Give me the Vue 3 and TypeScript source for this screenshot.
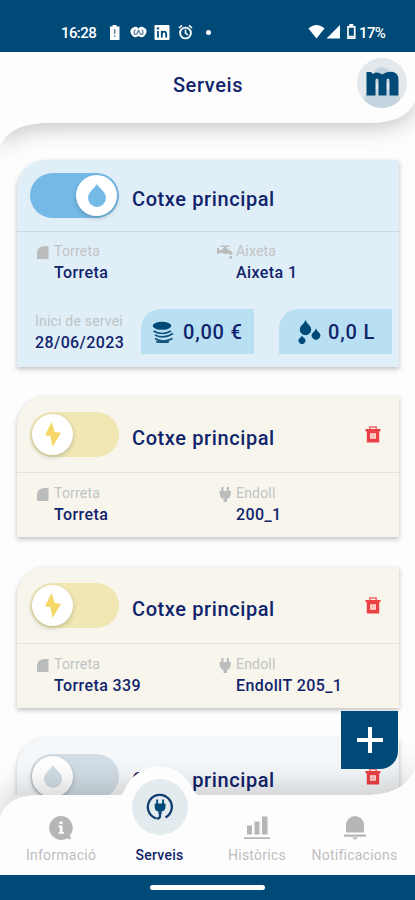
<script setup lang="ts">
interface Field {
  icon: 'tower' | 'tap' | 'plug'
  label: string
  value: string
}

interface Service {
  id: number
  kind: 'water' | 'power' | 'idle'
  active: boolean
  title: string
  removable: boolean
  fields: Field[]
  usage?: { start: string; cost: string; volume: string }
}

interface Tab {
  id: string
  label: string
  active: boolean
}

const services: Service[] = [
  {
    id: 1,
    kind: 'water',
    active: true,
    title: 'Cotxe principal',
    removable: false,
    fields: [
      { icon: 'tower', label: 'Torreta', value: 'Torreta' },
      { icon: 'tap', label: 'Aixeta', value: 'Aixeta 1' },
    ],
    usage: { start: '28/06/2023', cost: '0,00 €', volume: '0,0 L' },
  },
  {
    id: 2,
    kind: 'power',
    active: false,
    title: 'Cotxe principal',
    removable: true,
    fields: [
      { icon: 'tower', label: 'Torreta', value: 'Torreta' },
      { icon: 'plug', label: 'Endoll', value: '200_1' },
    ],
  },
  {
    id: 3,
    kind: 'power',
    active: false,
    title: 'Cotxe principal',
    removable: true,
    fields: [
      { icon: 'tower', label: 'Torreta', value: 'Torreta 339' },
      { icon: 'plug', label: 'Endoll', value: 'EndollT 205_1' },
    ],
  },
  {
    id: 4,
    kind: 'idle',
    active: false,
    title: 'Cotxe principal',
    removable: true,
    fields: [],
  },
]

const tabs: Tab[] = [
  { id: 'info', label: 'Informació', active: false },
  { id: 'services', label: 'Serveis', active: true },
  { id: 'history', label: 'Històrics', active: false },
  { id: 'alerts', label: 'Notificacions', active: false },
]
</script>

<template>
  <div class="screen">
    <div class="status">
      <span class="clock">16:28</span>
      <svg class="status-left" width="100" height="18" viewBox="0 0 100 18">
        <path d="M2 3.500h2.500V2h4v1.500H11.500V17H2z" fill="#fff" />
        <path d="M6.700 6v5M6.700 12.500v1.500" stroke="#527b98" stroke-width="1.300" />
        <path d="M24.500 5c2.500-1.800 4.300-1.300 6 .5 1.700-1.800 3.500-2.300 6-.5 3.500 2 2 5.500-.2 8-2 1.700-4 1.400-5.800 0-1.800 1.400-3.800 1.700-5.800 0-2.200-2.500-3.700-6-.2-8z" fill="#fff" />
        <path d="M27.700 7c-2 0-2 4.500 0 4.500S30 7.500 30.500 7M33.500 7c2 0 2 4.500 0 4.500S31 7.500 30.500 7" fill="none" stroke="#527b98" stroke-width="1.200" />
        <rect x="46.500" y="2" width="15" height="15" rx="1" fill="#fff" />
        <path d="M50 8v6.500M53.800 8v6.500M53.800 11c0-3 4.400-3.300 4.400 0v3.500" fill="none" stroke="#004a78" stroke-width="1.800" />
        <circle cx="50" cy="5.400" r="1.200" fill="#004a78" />
        <circle cx="77.500" cy="10" r="5.400" fill="none" stroke="#fff" stroke-width="1.900" />
        <path d="M71 5l3-2.700M84 5l-3-2.700M77.500 6.500V10l2.500 2" fill="none" stroke="#fff" stroke-width="1.600" />
      </svg>
      <span class="dot"></span>
      <svg class="status-right" width="50" height="16" viewBox="0 0 50 16">
        <path d="M.5 4.500C5-.3 12-.3 16.500 4.500L8.500 14.500z" fill="#fff" />
        <path d="M32 1v13.500H18.500z" fill="#fff" />
        <path d="M40 2.800h6.700v11.400H40z" fill="none" stroke="#fff" stroke-width="1.700" />
        <path d="M41.300 0h4v2.500h-4zM41 11.700h4.800v1.500H41z" fill="#fff" />
      </svg>
      <span class="battery">17%</span>
    </div>

    <header class="header">
      <svg class="header-shape" width="415" height="96" viewBox="0 0 415 96">
        <path d="M0 0H415V50C409 63 396 71 366 71H48C22 71 6 80 0 94z" fill="#fdfdfd" />
      </svg>
      <h1 class="heading">Serveis</h1>
      <div class="avatar">
        <svg width="50" height="50" viewBox="0 0 50 50">
          <circle cx="25" cy="25" r="25" fill="#e2e8ec" />
          <circle cx="25" cy="18" r="9" fill="#c4d5e0" />
          <path d="M7 42Q8 31 25 31T43 42Q35 50 25 50T7 42z" fill="#c4d5e0" />
          <path d="M9.500 14H14L16 16Q20 13 25 16.500Q30 13 36 14Q41.500 15 41.500 22V37.500H32.500V22.500Q32.500 20.500 31 20.500T29.500 22.500V37.500H21.500V22.500Q21.500 20.500 20 20.500T18.500 22.500V37.500H9.500z" fill="#004a78" />
        </svg>
      </div>
    </header>

    <main class="list">
      <article v-for="s in services" :key="s.id" class="card" :class="s.kind">
        <div class="card-head">
          <div class="toggle" :class="{ on: s.active }">
            <span class="knob">
              <svg v-if="s.kind === 'power'" width="20" height="27" viewBox="0 0 20 27">
                <path d="M8.500 1L2 14.500L7.500 15L9.500 26L18 11.800L11.800 11z" />
              </svg>
              <svg v-else width="20" height="25" viewBox="0 0 20 25">
                <path d="M10 1C11.500 4.500 19 8.500 19 15A9 9 0 0 1 1 15C1 8.500 8.500 4.500 10 1z" />
              </svg>
            </span>
          </div>
          <h2 class="title">{{ s.title }}</h2>
          <svg v-if="s.removable" class="trash" width="16" height="17" viewBox="0 0 16 17">
            <path d="M4.800 3V1h6.400V3" fill="none" stroke="#f0686a" stroke-width="1.500" />
            <path d="M.5 3h15v2.200H14.200V16.500H1.800V5.200H.5z" fill="#ec4144" />
            <path d="M5 7.200h6v5.600H5z" fill="#ffd0cb" />
            <path d="M6.700 8.700h2.600v2.600H6.700z" fill="#f9b3b0" />
          </svg>
        </div>
        <div v-if="s.fields.length" class="fields">
          <div v-for="f in s.fields" :key="f.label" class="field">
            <svg v-if="f.icon === 'tower'" class="field-icon" width="16" height="16" viewBox="0 0 16 16">
              <path d="M2 15V9Q2 2 10 2H13.500V15z" />
            </svg>
            <svg v-else-if="f.icon === 'tap'" class="field-icon" width="16" height="16" viewBox="0 0 16 16">
              <path d="M0 4h2v2h3V4.500h2V3H3.500V1.500h9V3H9v1.500h2V6Q15.500 6 15.500 10.500H12Q12 9 10.500 9.500Q8 11 5.500 9H2v1H0zM12.600 12h2.300v3h-2.300z" />
            </svg>
            <svg v-else class="field-icon" width="16" height="16" viewBox="0 0 16 16">
              <path d="M4.300 1H6.500v4h3.300V1H12v4H14v1.500h-.3V9Q13 12 10 13V16H6.500V13Q3.300 12 2.800 9V6.500H2.300V5h2z" />
            </svg>
            <span class="label">{{ f.label }}</span>
            <span class="value">{{ f.value }}</span>
          </div>
        </div>
        <div v-if="s.usage" class="usage">
          <div class="start">
            <span class="label">Inici de servei</span>
            <span class="value">{{ s.usage.start }}</span>
          </div>
          <div class="chip">
            <svg width="22" height="22" viewBox="0 0 22 22">
              <ellipse cx="10" cy="4.800" rx="9.300" ry="4" fill="#004a78" />
              <path d="M1.500 10Q10 15 19 10M3 14Q12 18.500 21 12.500M3 17.500Q11 22.500 20.500 17.500M4 20.500Q11 22.500 17 20.800" fill="none" stroke="#11517c" stroke-width="1.600" />
            </svg>
            <span>{{ s.usage.cost }}</span>
          </div>
          <div class="chip volume">
            <svg width="23" height="24" viewBox="0 0 23 24">
              <path d="M7.500 0Q8.500 3 11.500 5.500A5.700 5.700 0 1 1 3.500 5.500Q6.500 3 7.500 0zM18 8.500Q18.800 10.500 21 12.500A4.200 4.200 0 1 1 15 12.500Q17.200 10.500 18 8.500zM4 15.500Q4.600 17 6.500 18.200A3.400 3.400 0 1 1 1.500 18.200Q3.400 17 4 15.500z" fill="#004a78" />
            </svg>
            <span>{{ s.usage.volume }}</span>
          </div>
        </div>
      </article>
    </main>

    <button class="add" aria-label="Afegir">
      <svg width="26" height="26" viewBox="0 0 26 26">
        <path d="M13 0V26M0 13H26" stroke="#fff" stroke-width="4" />
      </svg>
    </button>

    <nav class="tabbar">
      <svg class="tabbar-shape" width="415" height="110" viewBox="0 0 415 110">
        <path class="tabbar-base" d="M0 110V53C4 38 16 30 42 30H364C394 30 408 20 415 4V110z" fill="#fdfdfd" />
        <path d="M117 31Q123 30 125 24A37 37 0 0 1 193 24Q195 30 201 31z" fill="#fdfdfd" />
      </svg>
      <div v-for="t in tabs" :key="t.id" class="tab" :class="[t.id, { active: t.active }]">
        <div class="tab-icon">
          <svg v-if="t.id === 'info'" width="26" height="26" viewBox="0 0 26 26">
            <path d="M13 1A12 12 0 1 0 19 23.500L23 24.500L22 20.500A12 12 0 0 0 13 1z" fill="#b5b6b7" />
            <path d="M11.500 6.500h3v2.500h-3zM10.500 10.500h4v6.500h1.500v1.800h-5.500V17h1.300v-4.500h-1.300z" fill="#fff" />
          </svg>
          <svg v-else-if="t.id === 'services'" width="28" height="28" viewBox="0 0 28 28">
            <path d="M10 25.300A12 12 0 1 1 19.500 24.500M14 18V23Q14 26 10.500 25.300" fill="none" stroke="#123d70" stroke-width="2.300" />
            <path d="M10.200 6.500h1.900v4h4V6.500H18v4h1.500V14Q19.300 18 15.500 18.500V21h-3v-2.500Q8.800 18 8.700 14v-3.500h1.500z" fill="#004a78" />
          </svg>
          <svg v-else-if="t.id === 'history'" width="26" height="26" viewBox="0 0 26 26">
            <path d="M3 10.500h5v9H3zM10.500 6.500h5v13h-5zM18 1.500h5.500v18H18zM0 22.300h26V24H0z" fill="#b5b6b7" />
          </svg>
          <svg v-else width="22" height="26" viewBox="0 0 22 26">
            <path d="M2 17.500V10A9 9 0 0 1 20 10V17.500zM0 19.500h22v2.300H0zM8.500 22.500h5Q13 24.500 11 24.500T8.500 22.500z" fill="#b5b6b7" />
          </svg>
        </div>
        <span class="tab-label">{{ t.label }}</span>
      </div>
    </nav>

    <div class="gesture"><span></span></div>
  </div>
</template>

<style>
html,
body {
  margin: 0;
  overflow: hidden;
}
</style>

<style scoped>
.screen {
  position: relative;
  box-sizing: border-box;
  display: flex;
  flex-direction: column;
  width: 415px;
  height: 900px;
  overflow: hidden;
  background: #fdfdfd;
  color: #10246c;
  font-family: Roboto, 'Liberation Sans', sans-serif;
}

.status {
  display: flex;
  flex: none;
  align-items: center;
  box-sizing: border-box;
  height: 52px;
  padding: 13px 0 0 61px;
  background: #004a78;
  color: #fff;
  font-size: 15px;
  font-weight: 500;
}
.clock {
  width: 35px;
  letter-spacing: -0.6px;
}
.status-left {
  margin-left: 12px;
  margin-top: -1px;
}
.dot {
  width: 5px;
  height: 5px;
  margin-left: -2px;
  border-radius: 50%;
  background: #fff;
}
.status-right {
  margin-left: 97px;
  margin-top: -1px;
}
.battery {
  margin-left: 1px;
  letter-spacing: -0.6px;
}

.header {
  position: relative;
  z-index: 2;
  display: grid;
  flex: none;
  place-items: center;
  height: 71px;
}
.header-shape {
  position: absolute;
  top: 0;
  left: 0;
  overflow: visible;
  filter: drop-shadow(0 6px 10px rgba(0, 0, 0, 0.2));
  clip-path: inset(0 0 -40px 0);
}
.heading {
  position: relative;
  margin: -5px 0 0 1px;
  font-size: 20px;
  font-weight: 500;
  letter-spacing: 0.6px;
}
.avatar {
  position: absolute;
  top: 6px;
  right: 8px;
}
.avatar svg {
  display: block;
}

.list {
  display: flex;
  flex: 1;
  flex-direction: column;
  gap: 30px;
  min-height: 0;
  padding: 37px 16px 0 17px;
  overflow: hidden;
}
.card {
  flex: none;
  box-sizing: border-box;
  height: 141px;
  border-radius: 30px 0 0 0;
  background: #f8f6ec;
  box-shadow: 0 2px 5px rgba(0, 0, 0, 0.25);
}
.card.water {
  height: 207px;
  margin-bottom: -1px;
  background: #e0eef8;
}
.card.idle {
  background: #f5f8fa;
}
.card-head {
  display: flex;
  box-sizing: border-box;
  height: 77px;
  padding: 16px 18px 0 13px;
  border-bottom: 1px solid #e3e2dd;
}
.water .card-head {
  height: 72px;
  padding-top: 13px;
  border-color: #c9dae5;
}
.toggle {
  display: flex;
  flex: none;
  align-items: center;
  box-sizing: border-box;
  width: 89px;
  height: 45px;
  padding: 2px;
  border-radius: 23px;
  background: #f0e7b3;
}
.toggle.on {
  justify-content: flex-end;
}
.water .toggle {
  background: #75bae7;
}
.idle .toggle {
  background: #d2dde5;
}
.knob {
  display: grid;
  place-items: center;
  width: 41px;
  height: 41px;
  border-radius: 50%;
  background: #fff;
  box-shadow: 0 2px 5px rgba(0, 0, 0, 0.2);
}
.knob svg {
  display: block;
  margin-top: -1px;
  fill: #f5d768;
}
.water .knob svg {
  fill: #75bae7;
}
.idle .knob svg {
  fill: #d2dde5;
}
.title {
  margin: 14px 0 0 13px;
  font-size: 20px;
  font-weight: 500;
  line-height: 24px;
  letter-spacing: 0.6px;
}
.trash {
  margin: 14px 0 0 auto;
}
.fields {
  display: grid;
  grid-template-columns: 182px 1fr;
  padding: 11px 0 0 18px;
}
.water .fields {
  padding-top: 10px;
}
.field {
  display: grid;
  grid-template-columns: 19px 1fr;
  grid-template-rows: 19px 24px;
  align-items: center;
}
.field-icon {
  fill: #bbbcbc;
}
.label {
  color: #bfc3c5;
  font-size: 14px;
  line-height: 19px;
  letter-spacing: 0.2px;
}
.value {
  grid-column: 2;
  font-size: 16px;
  font-weight: 500;
  line-height: 22px;
  letter-spacing: 0.4px;
}
.usage {
  display: flex;
  align-items: flex-start;
  padding: 24px 7px 0 18px;
}
.start {
  display: flex;
  flex-direction: column;
  width: 106px;
  padding-top: 3px;
}
.start .value {
  margin-top: 1px;
}
.chip {
  display: flex;
  align-items: center;
  gap: 9px;
  box-sizing: border-box;
  width: 113px;
  height: 45px;
  padding-left: 11px;
  border-radius: 20px 0 0 0;
  background: #b8dff2;
  font-size: 20px;
  font-weight: 500;
  letter-spacing: 0.8px;
  white-space: nowrap;
}
.chip svg {
  flex: none;
}
.chip.volume {
  gap: 7px;
  margin-left: auto;
  padding-left: 19px;
}

.add {
  position: absolute;
  z-index: 4;
  top: 711px;
  left: 341px;
  display: grid;
  place-items: center;
  width: 57px;
  height: 58px;
  padding: 0;
  border: 0;
  border-radius: 0 0 18px 0;
  background: #004a78;
}

.tabbar {
  position: relative;
  z-index: 3;
  display: grid;
  flex: none;
  grid-template-columns: 122px 75px 120px 75px;
  height: 80px;
}
.tabbar-shape {
  position: absolute;
  bottom: 0;
  left: 0;
  overflow: visible;
}
.tabbar-base {
  filter: drop-shadow(0 -10px 14px rgba(0, 0, 0, 0.16));
}
.tab {
  position: relative;
  display: flex;
  flex-direction: column;
  align-items: center;
  color: #bdbec0;
}
.tab-icon {
  display: grid;
  place-items: center;
  height: 26px;
  margin-top: 20px;
}
.tab-icon svg {
  display: block;
}
.tab-label {
  margin-top: 5px;
  font-size: 14px;
  line-height: 18px;
  letter-spacing: 0.25px;
  white-space: nowrap;
}
.tab.active {
  color: #10246c;
}
.active .tab-icon {
  width: 56px;
  height: 56px;
  margin-top: -16px;
  border-radius: 50%;
  background: #e4ebef;
}
.active .tab-label {
  margin-top: 11px;
  font-weight: 500;
}

.gesture {
  position: relative;
  z-index: 3;
  display: flex;
  flex: none;
  justify-content: center;
  box-sizing: border-box;
  height: 25px;
  padding-top: 10px;
  background: #004a78;
}
.gesture span {
  width: 115px;
  height: 5px;
  border-radius: 3px;
  background: #fff;
}
</style>
